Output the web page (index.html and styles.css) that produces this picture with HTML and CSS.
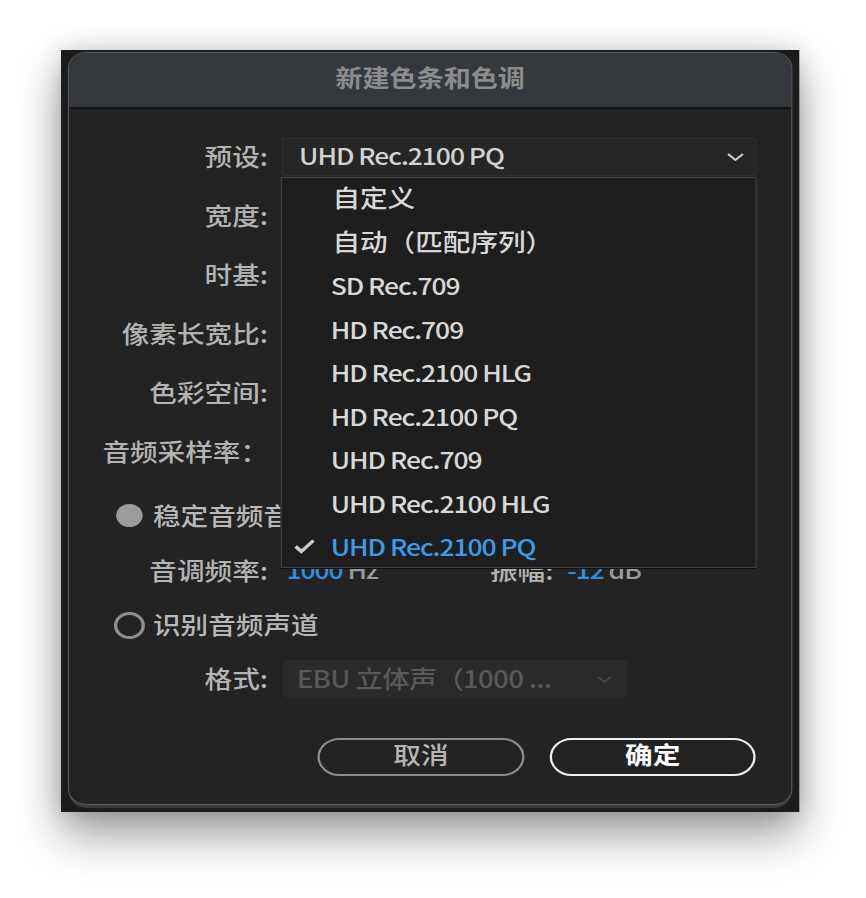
FILE: index.html
```html
<!DOCTYPE html>
<html lang="zh-CN">
<head>
    <meta charset="UTF-8">
    <title>新建色条和色调</title>
    <link rel="stylesheet" href="styles.css">
</head>
<body>
    <div class="frame">
        <div class="dialog">
            <div class="titlebar">新建色条和色调</div>

            <div class="content">
                <div class="field">
                    <span class="label">预设:</span>
                    <div class="control">
                        <div class="select">
                            <span class="latin">UHD Rec.2100 PQ</span>
                            <svg class="chevron" width="15" height="8" viewBox="0 0 15 8"><path d="M1 1 L7.5 7 L14 1" fill="none" stroke="#cfcfcf" stroke-width="1.8"/></svg>
                        </div>
                        <ul class="menu">
                            <li>自定义</li>
                            <li>自动（匹配序列）</li>
                            <li class="latin">SD Rec.709</li>
                            <li class="latin">HD Rec.709</li>
                            <li class="latin">HD Rec.2100 HLG</li>
                            <li class="latin">HD Rec.2100 PQ</li>
                            <li class="latin">UHD Rec.709</li>
                            <li class="latin">UHD Rec.2100 HLG</li>
                            <li class="latin selected">
                                <svg class="check" width="19" height="16" viewBox="0 0 19 16"><path d="M2 8.5 L7 13.5 L17.5 2.5" fill="none" stroke="#cccccc" stroke-width="3.2"/></svg>
                                UHD Rec.2100 PQ
                            </li>
                        </ul>
                    </div>
                </div>
                <div class="field"><span class="label">宽度:</span></div>
                <div class="field"><span class="label">时基:</span></div>
                <div class="field"><span class="label">像素长宽比:</span></div>
                <div class="field"><span class="label">色彩空间:</span></div>
                <div class="field"><span class="label">音频采样率：</span></div>

                <div class="option option-first">
                    <span class="radio radio-on"></span>
                    <span class="option-text">稳定音频音调</span>
                </div>
                <div class="field field-tone">
                    <span class="label">音调频率:</span>
                    <span class="value value-freq latin"><em>1000</em> Hz</span>
                    <span class="inline-label">振幅:</span>
                    <span class="value value-amp latin"><em>-12</em> dB</span>
                </div>
                <div class="option">
                    <span class="radio radio-off"></span>
                    <span class="option-text">识别音频声道</span>
                </div>
                <div class="field field-format">
                    <span class="label">格式:</span>
                    <div class="select select-disabled">
                        <span class="mixed">EBU 立体声（1000 ...</span>
                        <svg class="chevron" width="13" height="7" viewBox="0 0 13 7"><path d="M1 1 L6.5 6 L12 1" fill="none" stroke="#4b4b4b" stroke-width="1.6"/></svg>
                    </div>
                </div>

                <div class="buttons">
                    <button class="btn btn-cancel">取消</button>
                    <button class="btn btn-ok">确定</button>
                </div>
            </div>
        </div>
    </div>
</body>
</html>
```

FILE: styles.css
```css
* {
    box-sizing: border-box;
}

html, body {
    margin: 0;
}

body {
    background: #ffffff;
    font-family: "Noto Sans CJK SC", "Noto Sans", sans-serif;
    font-weight: 500;
    padding: 50px 0 0 61px;
    height: 898px;
    overflow: hidden;
}

.frame {
    width: 642px;
    height: 762px;
    padding: 2px 6px 7px;
    background: #1c1c1c;
    transform: scaleX(1.15);
    transform-origin: 0 0;
    box-shadow: 0 22px 40px rgba(0, 0, 0, 0.4), 0 0 22px rgba(0, 0, 0, 0.15);
}

.dialog {
    height: 100%;
    border: 1px solid #585858;
    border-radius: 16px;
    background: #232323;
    box-shadow: 0 4px 0 -1px #3b3b3b;
    overflow: hidden;
}

.titlebar {
    height: 56px;
    padding-bottom: 6px;
    background: #35393d;
    border-bottom: 2px solid #161616;
    display: flex;
    align-items: center;
    justify-content: center;
    font-size: 23.5px;
    font-weight: 700;
    color: #8c8c8c;
}

.content {
    padding-top: 29px;
}

.field {
    display: flex;
    align-items: center;
    height: 38px;
    margin-top: 21px;
}

.field:first-child {
    margin-top: 0;
}

.label {
    width: 173px;
    padding-bottom: 4px;
    text-align: right;
    font-size: 24px;
    color: #b3b3b3;
    white-space: nowrap;
}

.latin {
    font-size: 23px;
    letter-spacing: -0.9px;
}

.control {
    position: relative;
    margin-left: 12px;
}

.select {
    display: flex;
    align-items: center;
    justify-content: space-between;
    width: 413px;
    height: 38px;
    padding: 0 10px 4px 14px;
    background: #262626;
    border: 1px solid #313131;
    border-radius: 3px;
    font-size: 24px;
    color: #d2d2d2;
}

.select .chevron {
    margin-top: 4px;
}

.menu {
    position: absolute;
    top: 39px;
    left: -1px;
    width: 414px;
    height: 391px;
    margin: 0;
    padding: 0;
    list-style: none;
    background: #1e1e1e;
    border: 1px solid #424242;
    box-shadow: 0 1px 0 #101010;
}

.menu li {
    position: relative;
    height: 43.5px;
    line-height: 38px;
    padding-left: 44px;
    font-size: 24px;
    color: #d8d8d8;
    white-space: nowrap;
}

.menu li.latin {
    padding-left: 42.5px;
    font-size: 23px;
    line-height: 40px;
}

.menu li.selected {
    color: #3a9ce6;
}

.check {
    position: absolute;
    left: 10px;
    top: 12px;
}

.option {
    display: flex;
    align-items: center;
    height: 38px;
    margin-top: 16px;
}

.option-first {
    margin-top: 26px;
}

.radio {
    flex: none;
    border-radius: 50%;
}

.radio-on {
    width: 23px;
    height: 23px;
    margin: 0 9px 2px 41px;
    background: #9b9b9b;
}

.radio-off {
    width: 27px;
    height: 27px;
    margin: 0 7px 0 39px;
    border: 3px solid #8e8e8e;
}

.option-text {
    padding-bottom: 4px;
    font-size: 24px;
    color: #b8b8b8;
}

.field-tone {
    margin-top: 17px;
}

.value {
    padding-bottom: 4px;
    color: #9a9a9a;
}

.value em {
    font-style: normal;
    color: #2f8fe0;
}

.value-freq {
    width: 177px;
    margin-left: 16px;
}

.inline-label {
    padding-bottom: 4px;
    font-size: 24px;
    color: #b3b3b3;
}

.value-amp {
    margin-left: 12px;
}

.field-format {
    margin-top: 16px;
}

.select-disabled {
    width: 299px;
    margin-left: 13px;
    padding: 0 13px 4px 12px;
    background: #2a2a2a;
    border: none;
    border-radius: 4px;
    color: #595959;
}

.mixed {
    letter-spacing: -0.6px;
}

.buttons {
    display: flex;
    gap: 22px;
    margin: 40px 0 0 216px;
}

.btn {
    display: flex;
    align-items: center;
    justify-content: center;
    height: 38px;
    padding: 0 0 6px;
    border-radius: 19px;
    background: transparent;
    font-family: inherit;
    font-size: 24px;
    line-height: 1;
    font-weight: 500;
}

.btn-cancel {
    width: 180px;
    border: 2px solid #8d8d8d;
    color: #b5b5b5;
}

.btn-ok {
    width: 179px;
    border: 2px solid #f0f0f0;
    color: #ffffff;
    font-weight: 700;
}
```
